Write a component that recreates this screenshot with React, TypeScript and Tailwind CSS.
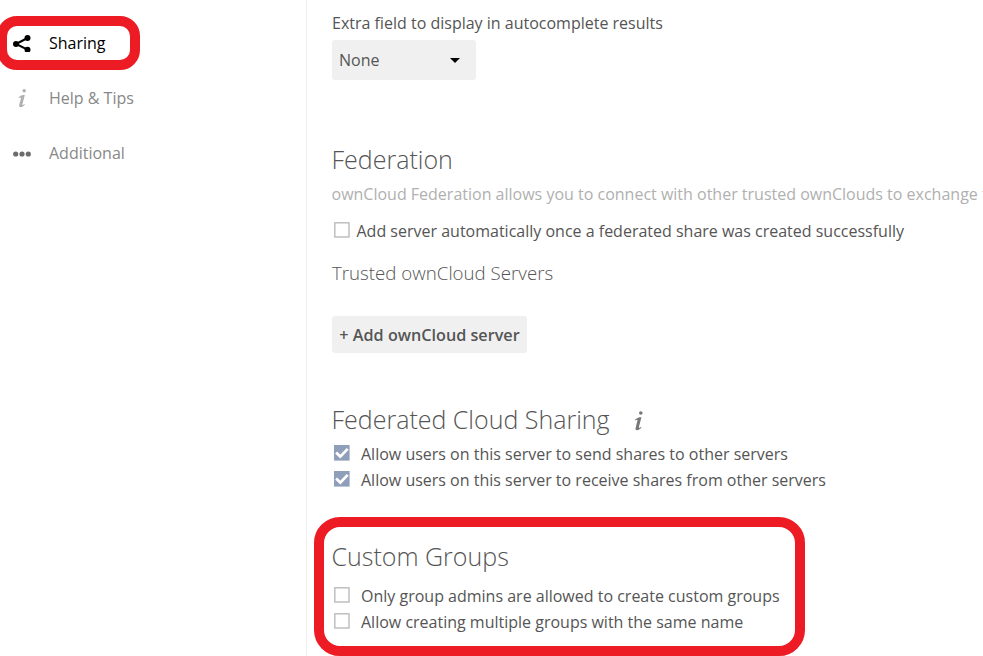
import React from "react";

function Check({ on = false }: { on?: boolean }) {
  return on ? (
    <svg className="-mt-[2px] h-4 w-4 shrink-0" viewBox="0 0 16 16">
      <rect width="15.6" height="15.6" fill="#8f9fba" />
      <path d="m2.100 7.500 4.200 4.100 7.400-7.700" fill="none" stroke="#fff" strokeWidth="2.8" />
    </svg>
  ) : (
    <svg className="-mt-[2px] h-4 w-4 shrink-0" viewBox="0 0 16 16">
      <rect x="0.8" y="0.8" width="14.2" height="14.2" fill="#fff" stroke="#bbb" strokeWidth="1.4" />
    </svg>
  );
}

function Info({ className }: { className: string }) {
  return (
    <svg className={className} viewBox="0 0 20 20" fill="currentColor">
      <circle cx="12.200" cy="2.800" r="1.700" />
      <path d="M12.800 7 10.400 16.200c-.2.800 0 1 .5.800.5-.2 1.100-.7 1.500-1.100l.5.500c-1.200 1.600-2.700 2.800-4.300 2.800-1.400 0-1.700-.9-1.300-2.400l1.600-6.300c.2-.8 0-1.100-.4-1.100-.5 0-1.200.4-1.700.7l-.4-.6C8 8.200 9.600 7.200 11.200 7Z" />
    </svg>
  );
}

export default function App() {
  return (
    <div className="relative flex h-[656px] w-[983px] overflow-hidden bg-white font-['Open_Sans',sans-serif] text-base leading-[22px] text-[#555]">
      <nav className="w-[307px] shrink-0 border-r border-[#eee]">
        <div className="flex h-[70px] items-center pt-4">
          <div className="-ml-[3px] flex h-[54px] w-[143px] shrink-0 items-center rounded-[20px] border-[10px] border-[#ed1c24] pl-[6px] text-black">
            <svg className="h-[18px] w-[18px]" viewBox="0 0 18 18"><path d="M14.500 4 3 10l11.500 5.700" fill="none" stroke="#000" strokeWidth="2" /><circle cx="14.500" cy="4" r="3" /><circle cx="3" cy="10" r="3" /><circle cx="14.500" cy="15.700" r="3" /></svg>
            <span className="ml-[18px]">Sharing</span>
          </div>
        </div>
        <div className="flex h-[56px] items-center pl-[12px] text-[#888]"><Info className="h-5 w-5 text-[#b0b0b0]" /><span className="ml-[17px]">Help &amp; Tips</span></div>
        <div className="flex h-[54px] items-center pl-[13px] text-[#888]">
          <svg className="h-[18px] w-[18px]" viewBox="0 0 18 18" fill="#6c6c6c"><circle cx="2.700" cy="10" r="2.600" /><circle cx="9" cy="10" r="2.600" /><circle cx="15.300" cy="10" r="2.600" /></svg>
          <span className="ml-[18px]">Additional</span>
        </div>
      </nav>
      <main className="w-[676px] shrink-0 pl-[25px] whitespace-nowrap">
        <p className="mt-3">Extra field to display in autocomplete results</p>
        <div className="mt-[6px] flex h-10 w-36 items-center justify-between rounded-[3px] bg-[#f0f0f0] pr-4 pl-[7px]">None<svg className="h-[5px] w-[10px]" viewBox="0 0 10 5"><path d="M0 0h10L5 5Z" /></svg></div>
        <h2 className="mt-[62px] -ml-[0.500px] h-[34px] text-[25px] leading-[34px] font-light">Federation</h2>
        <p className="mt-[7px] -ml-[0.500px] text-[#b0b0b0]">ownCloud Federation allows you to connect with other trusted ownClouds to exchange the</p>
        <div className="mt-[15px] flex items-center gap-[6.500px] pl-[2px]"><Check /><span>Add server automatically once a federated share was created successfully</span></div>
        <h3 className="mt-[20px] text-[18.700px] font-light">Trusted ownCloud Servers</h3>
        <button className="mt-[32px] block h-[37px] w-[195px] rounded-[3px] bg-[#f0f0f0] text-[16.200px] font-semibold">+ Add ownCloud server</button>
        <h2 className="mt-[49px] -ml-[0.500px] flex h-[34px] items-center text-[25px] font-light">Federated Cloud Sharing<Info className="mt-[3px] ml-[18px] h-[21px] w-[21px] text-[#777]" /></h2>
        <div className="mt-[7px] flex items-center gap-[11px] pl-[2px]"><Check on /><span>Allow users on this server to send shares to other servers</span></div>
        <div className="mt-1 flex items-center gap-[11px] pl-[2px]"><Check on /><span>Allow users on this server to receive shares from other servers</span></div>
        <section className="mt-[26px] -ml-[18px] h-[139px] w-[491px] rounded-[26px] border-[10px] border-[#ed1c24] pt-[12px] pl-[8px]">
          <h2 className="-ml-[0.500px] h-[34px] text-[25px] leading-[34px] font-light">Custom Groups</h2>
          <div className="mt-[12px] flex items-center gap-[11px] pl-[2px]"><Check /><span>Only group admins are allowed to create custom groups</span></div>
          <div className="mt-1 flex items-center gap-[11px] pl-[2px]"><Check /><span>Allow creating multiple groups with the same name</span></div>
        </section>
      </main>
    </div>
  );
}
